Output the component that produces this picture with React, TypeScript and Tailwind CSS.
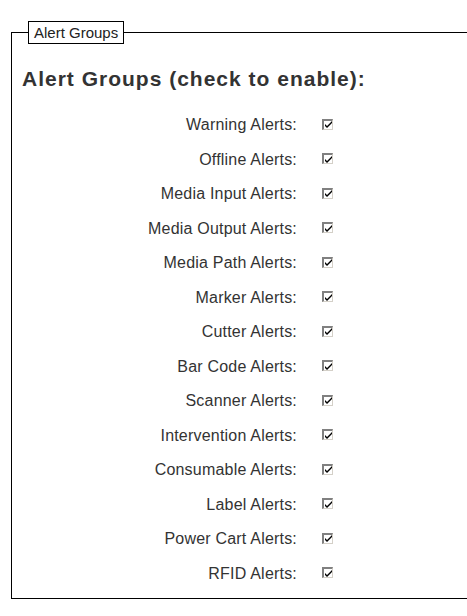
import React from 'react';

const groups = [
  'Warning Alerts:',
  'Offline Alerts:',
  'Media Input Alerts:',
  'Media Output Alerts:',
  'Media Path Alerts:',
  'Marker Alerts:',
  'Cutter Alerts:',
  'Bar Code Alerts:',
  'Scanner Alerts:',
  'Intervention Alerts:',
  'Consumable Alerts:',
  'Label Alerts:',
  'Power Cart Alerts:',
  'RFID Alerts:',
];

function OldCheckbox() {
  return (
    <span className="inline-flex h-[11px] w-[11px] items-center justify-center border-t-2 border-l-2 border-b border-r border-t-[#808080] border-l-[#808080] border-b-[#d4d0c8] border-r-[#d4d0c8] bg-white">
      <svg width="7" height="7" viewBox="0 0 7 7" className="block">
        <path d="M0 3 L0 5 L2 7 L7 2 L7 0 L2 5 Z" fill="#000" />
      </svg>
    </span>
  );
}

export default function App() {
  return (
    <div className="min-h-[616px] w-full overflow-hidden bg-white pt-[21px] pl-[11px] font-['Liberation_Sans',Arial,sans-serif] text-[#333]">
      <fieldset className="border-t border-l border-b border-black pb-[7px]">
        <legend className="ml-[16px] border border-black px-[5px] text-[15px] leading-[21px] text-[#222]">
          Alert Groups
        </legend>
        <h1 className="mt-[23px] ml-[10px] text-[21px] leading-[24px] font-bold tracking-[1px]">
          Alert Groups (check to enable):
        </h1>
        <div className="mt-[17px] grid grid-cols-[285px_auto] gap-x-[25px]">
          {groups.map((g) => (
            <React.Fragment key={g}>
              <div className="h-[34.5px] text-right text-[16px] leading-[34.5px] tracking-[0.2px]">{g}</div>
              <div className="flex h-[34.5px] items-center pb-[2px]">
                <OldCheckbox />
              </div>
            </React.Fragment>
          ))}
        </div>
      </fieldset>
    </div>
  );
}
